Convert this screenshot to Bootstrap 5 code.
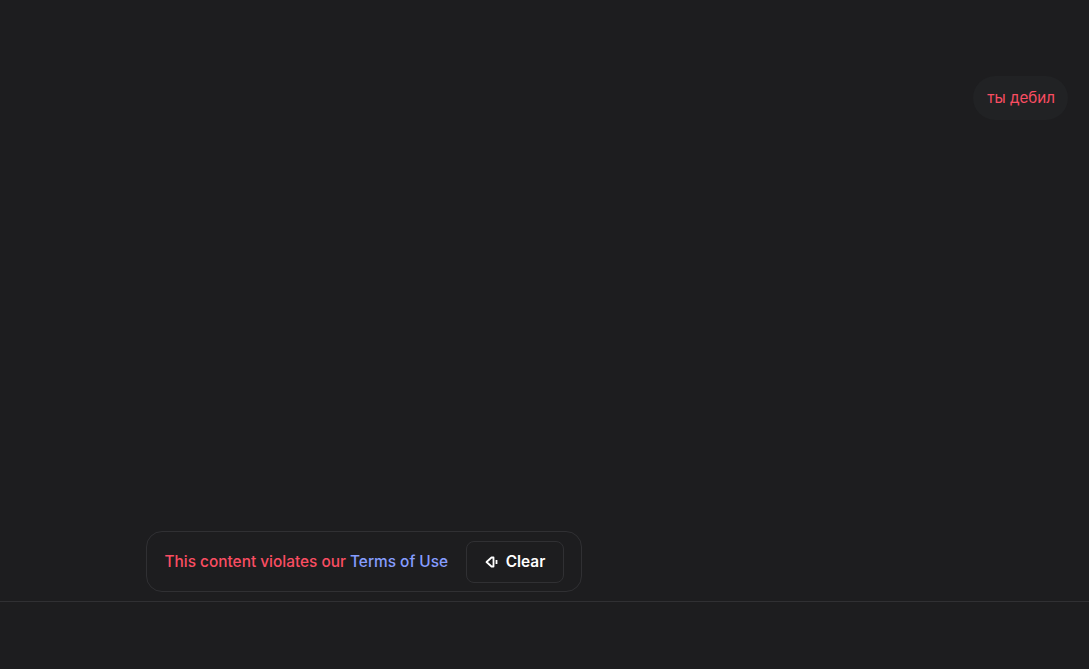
<!DOCTYPE html>
<html>
<head>
    <title>Chat</title>
    <link href="https://cdn.jsdelivr.net/npm/bootstrap@5.3.0/dist/css/bootstrap.min.css" rel="stylesheet">
    <style>
        html, body { height: 100%; }
        body { background: #1d1d1f; font-family: Inter, "Noto Sans", sans-serif; font-size: 15px; overflow: hidden; }
        .chat-thread { height: 601px; padding-top: 76px; padding-right: 21px; padding-bottom: 9px; }
        .user-bubble { background: #212224; color: #fa4d62; border-radius: 22px; height: 44px; padding: 0 13px 0 14px; font-size: 15.2px; }
        .notice-wrap { padding-left: 146px; }
        .notice-box { width: 436px; height: 61px; border: 1px solid #303033; border-radius: 16px; padding: 0 17px 0 17.5px; font-weight: 500; font-size: 15.4px; }
        .notice-text { color: #fa4d62; }
        .notice-text a { color: #869dff; text-decoration: none; }
        .clear-btn { width: 98px; height: 42px; border: 1px solid #303033; border-radius: 8px; background: transparent; color: #fff; font-weight: 600; font-size: 15.4px; padding: 0; gap: 7px; }
        .input-area { border-top: 1px solid #303033; height: 68px; }
    </style>
</head>
<body>
    <div class="chat-thread d-flex flex-column">
        <div class="d-flex justify-content-end">
            <div class="user-bubble d-flex align-items-center">ты дебил</div>
        </div>
        <div class="notice-wrap mt-auto">
            <div class="notice-box d-flex align-items-center justify-content-between">
                <span class="notice-text">This content violates our <a href="#">Terms of Use</a></span>
                <button class="clear-btn d-flex align-items-center justify-content-center">
                    <svg width="14" height="14" viewBox="0 0 14 14" fill="none" stroke="#fff" stroke-width="1.8">
                        <path d="M1.5 7 6.5 2.5H8.5V11.5H6.5Z" stroke-linejoin="round"/>
                        <path d="M11.5 5V9"/>
                    </svg>
                    Clear
                </button>
            </div>
        </div>
    </div>
    <div class="input-area"></div>
    <script src="https://cdn.jsdelivr.net/npm/bootstrap@5.3.0/dist/js/bootstrap.bundle.min.js"></script>
</body>
</html>
